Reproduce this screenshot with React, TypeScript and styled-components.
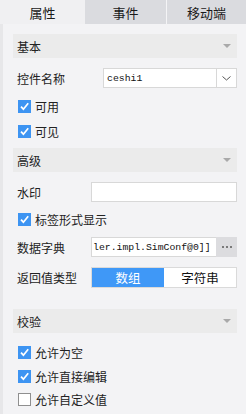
import React from 'react'
import styled, { createGlobalStyle } from 'styled-components'

const GlobalStyle = createGlobalStyle`
  html, body {
    margin: 0;
    padding: 0;
    background: #f3f3f5;
  }
  body {
    font-family: "Noto Sans CJK SC", "Noto Sans", sans-serif;
    font-size: 12px;
    color: #222;
  }
`

const Panel = styled.div`
  width: 246px;
  height: 414px;
  display: flex;
  flex-direction: column;
  background: #f3f3f5;
  overflow: hidden;
`

const TabBar = styled.div`
  display: grid;
  grid-template-columns: 85px 81px 1fr;
  height: 24px;
  flex-shrink: 0;
`

const Tab = styled.div<{ $active?: boolean; $divider?: boolean }>`
  display: flex;
  align-items: center;
  justify-content: center;
  font-size: 13px;
  color: #1a1a1a;
  background: ${p => (p.$active ? '#f0f0f2' : '#dadbdf')};
  border-left: ${p => (p.$divider ? '1px solid #f4f4f6' : 'none')};
`

const Body = styled.div`
  flex: 1;
  display: flex;
  border-left: 3px solid #e7e7e9;
  padding: 10px 9px 0 10px;
`

const Content = styled.div`
  flex: 1;
  display: flex;
  flex-direction: column;
`

const SectionHeader = styled.div<{ $top?: number }>`
  height: 24px;
  display: flex;
  align-items: center;
  justify-content: space-between;
  padding: 0 6px 0 4px;
  background: #ebebeb;
  margin-top: ${p => p.$top ?? 0}px;
  font-size: 12px;
`

const Caret = styled.span`
  width: 0;
  height: 0;
  border-left: 4px solid transparent;
  border-right: 4px solid transparent;
  border-top: 4px solid #a9a9a9;
`

const FieldRow = styled.div<{ $top: number; $label: number }>`
  display: grid;
  grid-template-columns: ${p => p.$label}px 1fr;
  align-items: center;
  height: 20px;
  margin-top: ${p => p.$top}px;
  padding-left: 4px;
`

const Label = styled.span`
  font-size: 12px;
  color: #222;
  white-space: nowrap;
`

const Input = styled.div`
  height: 20px;
  box-sizing: border-box;
  display: flex;
  align-items: stretch;
  background: #fff;
  border: 1px solid #d8d8d8;
`

const InputText = styled.div<{ $pad: number }>`
  flex: 1;
  display: flex;
  align-items: center;
  padding-left: ${p => p.$pad}px;
  font-family: "Liberation Mono", "DejaVu Sans Mono", monospace;
  font-size: 9.8px;
  color: #111;
  white-space: nowrap;
  overflow: hidden;
`

const DropButton = styled.div`
  width: 19px;
  display: flex;
  align-items: center;
  justify-content: center;
  border-left: 1px solid #d8d8d8;
`

const MoreButton = styled.div`
  width: 21px;
  margin: -1px -1px -1px 0;
  display: flex;
  align-items: center;
  justify-content: center;
  gap: 2px;
  background: #dcdcdf;
`

const Dot = styled.span`
  width: 2px;
  height: 2px;
  background: #7a7a7a;
`

const Segmented = styled.div`
  height: 21px;
  box-sizing: border-box;
  display: grid;
  grid-template-columns: 72px 1fr;
  border: 1px solid #dadada;
  background: #fff;
`

const Segment = styled.div<{ $on?: boolean }>`
  display: flex;
  align-items: center;
  justify-content: center;
  font-size: 12.5px;
  background: ${p => (p.$on ? '#3f98f7' : '#fff')};
  color: ${p => (p.$on ? '#fff' : '#111')};
`

const CheckRow = styled.label<{ $top: number }>`
  display: flex;
  align-items: center;
  gap: 4px;
  height: 24px;
  margin-top: ${p => p.$top}px;
  padding-left: 5px;
  font-size: 12px;
  color: #222;
`

const Box = styled.span<{ $checked?: boolean }>`
  width: 13px;
  height: 13px;
  box-sizing: border-box;
  display: flex;
  align-items: center;
  justify-content: center;
  background: ${p => (p.$checked ? '#3d94f2' : '#fff')};
  border: ${p => (p.$checked ? 'none' : '1px solid #8f8f8f')};
`

function Check({ label, checked, top }: { label: string; checked?: boolean; top: number }) {
  return (
    <CheckRow $top={top}>
      <Box $checked={checked}>
        {checked && (
          <svg width="11" height="11" viewBox="0 0 11 11">
            <path d="M2 5.6 L4.4 8.2 L9.2 2.2" fill="none" stroke="#fff" strokeWidth="1.7" />
          </svg>
        )}
      </Box>
      {label}
    </CheckRow>
  )
}

export default function App() {
  return (
    <Panel>
      <GlobalStyle />
      <TabBar>
        <Tab $active>属性</Tab>
        <Tab>事件</Tab>
        <Tab $divider>移动端</Tab>
      </TabBar>
      <Body>
        <Content>
          <SectionHeader>
            基本
            <Caret />
          </SectionHeader>
          <FieldRow $top={10} $label={86}>
            <Label>控件名称</Label>
            <Input>
              <InputText $pad={3}>ceshi1</InputText>
              <DropButton>
                <svg width="9" height="5" viewBox="0 0 9 5">
                  <path d="M0.5 0.5 L4.5 4 L8.5 0.5" fill="none" stroke="#555" strokeWidth="1" />
                </svg>
              </DropButton>
            </Input>
          </FieldRow>
          <Check label="可用" checked top={6} />
          <Check label="可见" checked top={1} />

          <SectionHeader $top={5}>
            高级
            <Caret />
          </SectionHeader>
          <FieldRow $top={10} $label={74}>
            <Label>水印</Label>
            <Input />
          </FieldRow>
          <Check label="标签形式显示" checked top={5} />
          <FieldRow $top={6} $label={74}>
            <Label>数据字典</Label>
            <Input>
              <InputText $pad={1}>ler.impl.SimConf@0]]</InputText>
              <MoreButton>
                <Dot />
                <Dot />
                <Dot />
              </MoreButton>
            </Input>
          </FieldRow>
          <FieldRow $top={10} $label={74}>
            <Label>返回值类型</Label>
            <Segmented>
              <Segment $on>数组</Segment>
              <Segment>字符串</Segment>
            </Segmented>
          </FieldRow>

          <SectionHeader $top={22}>
            校验
            <Caret />
          </SectionHeader>
          <Check label="允许为空" checked top={7} />
          <Check label="允许直接编辑" top={0} checked />
          <Check label="允许自定义值" top={-1} />
        </Content>
      </Body>
    </Panel>
  )
}
